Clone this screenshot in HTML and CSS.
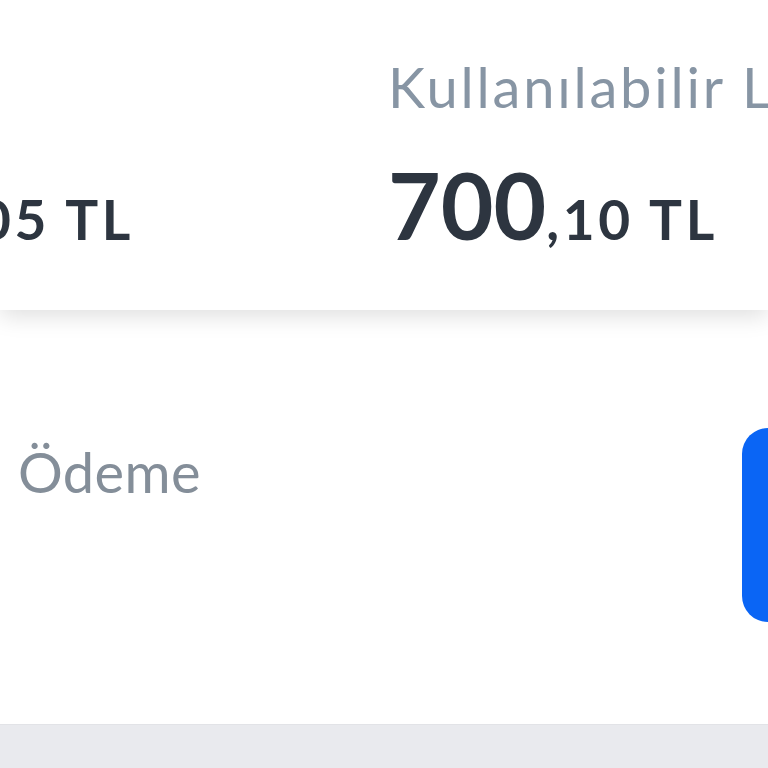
FILE: index.html
```html
<!DOCTYPE html>
<html lang="tr">
<head>
    <meta charset="UTF-8">
    <meta name="viewport" content="width=device-width, initial-scale=1.0">
    <title>Kart Özeti</title>
    <link rel="stylesheet" href="styles.css">
</head>
<body>
    <div class="summaryCard">
        <div class="stats">
            <div class="stat statLeft">
                <div class="statInner">
                    <div class="statLabel">Borç</div>
                    <div class="statValue"><span class="whole">12.450</span>,05 TL</div>
                </div>
            </div>
            <div class="stat statRight">
                <div class="statInner">
                    <div class="statLabel">Kullanılabilir Limit</div>
                    <div class="statValue"><span class="whole">700</span>,10 TL</div>
                </div>
            </div>
        </div>
    </div>

    <div class="paySection">
        <div class="payRow">
            <div class="payLabel">Asgari Ödeme</div>
            <button class="payButton">Öde</button>
        </div>
    </div>

    <div class="bottomBar"></div>
</body>
</html>
```

FILE: styles.css
```css
body {
    font-family: Lato, "Noto Sans", sans-serif;
    margin: 0;
    padding: 0;
    background-color: #fff;
    overflow: hidden;
    height: 768px;
    display: flex;
    flex-direction: column;
}

.summaryCard {
    height: 310px;
    background-color: #fff;
    box-shadow: 0 6px 22px rgba(0, 0, 0, 0.13);
    position: relative;
    z-index: 1;
    flex-shrink: 0;
}

.stats {
    display: flex;
    padding-top: 57px;
}

.stat {
    white-space: nowrap;
}

/* left column is cropped by the window, so it hangs off to the left */
.statLeft {
    width: 134px;
    display: flex;
    justify-content: flex-end;
}

.statRight {
    margin-left: 254px;
}

.statLabel {
    font-size: 56px;
    color: #8795a4;
    line-height: 60px;
    letter-spacing: 2.8px;
}

.statValue {
    margin-top: 48px;
    font-size: 55px;
    font-weight: 700;
    color: #2d3540;
    line-height: 80px;
    letter-spacing: 3.6px;
}

.whole {
    font-size: 91px;
    letter-spacing: 0;
}

.paySection {
    flex: 1;
    background-color: #fff;
    border-bottom: 1px solid #e2e3e7;
}

.payRow {
    display: flex;
    justify-content: space-between;
    align-items: flex-start;
    margin-left: -152px;
    margin-right: -60px;
    padding-top: 118px;
}

.payLabel {
    font-size: 56px;
    color: #848e99;
    line-height: 60px;
    margin-top: 14px;
    letter-spacing: 0.4px;
    white-space: nowrap;
}

.payButton {
    width: 86px;
    height: 194px;
    border: none;
    border-radius: 26px;
    background-color: #0a65f5;
    color: #fff;
    font-size: 40px;
    font-family: inherit;
    padding: 0;
    text-indent: 200px;
    overflow: hidden;
}

.bottomBar {
    height: 43px;
    background-color: #e9eaee;
    flex-shrink: 0;
}
```
